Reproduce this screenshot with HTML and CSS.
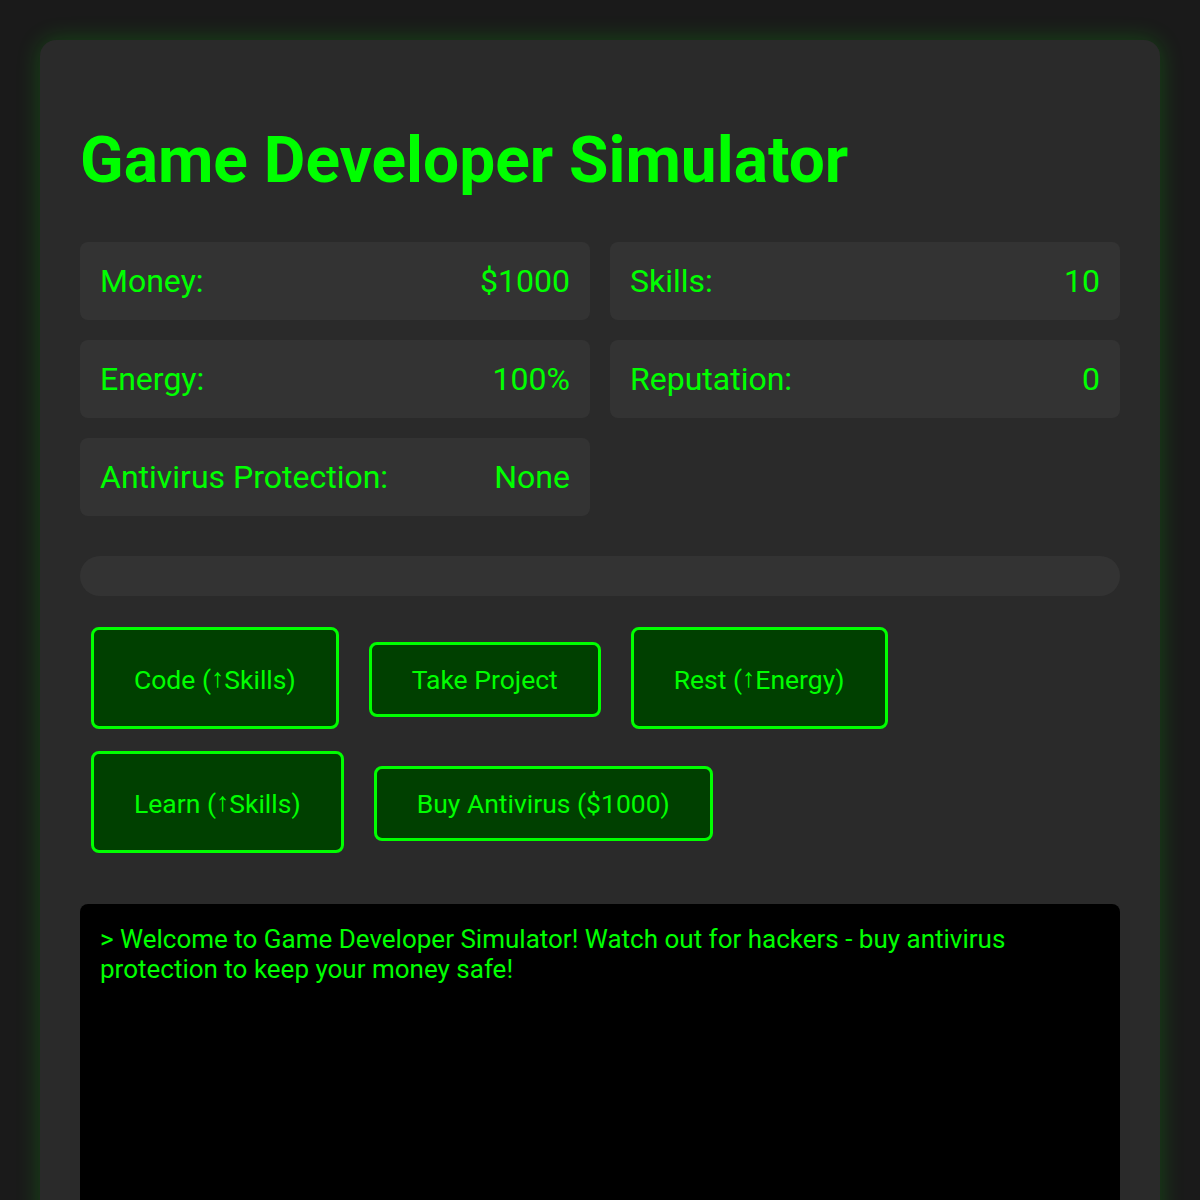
FILE: index.html
```html
<!DOCTYPE html>
<html>
  <head>
    <title>Game Developer Simulator</title>
    <link rel="stylesheet" href="styles.css">
  </head>

  <body>
    <div id="game">
      <h1>Game Developer Simulator</h1>

      <!-- Player stats -->
      <div id="stats">
        <div class="stat">
          <span>Money:</span>
          <span id="money">$1000</span>
        </div>
        <div class="stat">
          <span>Skills:</span>
          <span id="skills">10</span>
        </div>
        <div class="stat">
          <span>Energy:</span>
          <span id="energy">100%</span>
        </div>
        <div class="stat">
          <span>Reputation:</span>
          <span id="reputation">0</span>
        </div>
        <div class="stat">
          <span>Antivirus Protection:</span>
          <span id="antivirus">None</span>
        </div>
      </div>

      <div id="progress">
        <div id="progressFill"></div>
      </div>

      <!-- Actions -->
      <div id="actions">
        <button id="codeBtn">Code (<span class="up">↑</span>Skills)</button>
        <button id="projectBtn">Take Project</button>
        <button id="restBtn">Rest (<span class="up">↑</span>Energy)</button>
        <button id="learnBtn">Learn (<span class="up">↑</span>Skills)</button>
        <button id="antivirusBtn">Buy Antivirus ($1000)</button>
      </div>

      <div id="log">
        <p>&gt; Welcome to Game Developer Simulator! Watch out for hackers - buy antivirus protection to keep your money safe!</p>
      </div>
    </div>
  </body>
</html>
```

FILE: styles.css
```css
body {
  margin: 0;
  padding: 40px;
  background: #1a1a1a;
  color: #00ff00;
  font-family: Roboto, "Liberation Sans", sans-serif;
  font-size: 26px;
}

#game {
  max-width: 1040px;
  margin: 0 auto;
  padding: 40px;
  background: #2a2a2a;
  border-radius: 16px;
  box-shadow: 0 0 24px rgba(0, 255, 0, 0.2);
}

h1 {
  font-size: 64px;
  margin: 43px 0 44px;
}

#stats {
  display: grid;
  grid-template-columns: 1fr 1fr;
  gap: 20px;
  margin-bottom: 40px;
}

.stat {
  display: flex;
  justify-content: space-between;
  padding: 20px;
  background: #333;
  border-radius: 8px;
  font-size: 32px;
}

#progress {
  height: 40px;
  background: #333;
  border-radius: 20px;
  overflow: hidden;
  margin-bottom: 20px;
}

#progressFill {
  width: 0;
  height: 100%;
  background: #00ff00;
}

#actions {
  display: flex;
  flex-wrap: wrap;
  align-items: baseline;
  column-gap: 8px;
  margin-bottom: 40px;
}

button {
  margin: 11px;
  padding: 19px 40px;
  background: #004000;
  color: #00ff00;
  border: 3px solid #00ff00;
  border-radius: 8px;
  font-family: inherit;
  font-size: 26.5px;
  cursor: pointer;
}

button:hover {
  background: #005500;
}

/* the arrow glyph sits in a taller line */
.up {
  line-height: 58px;
  vertical-align: 2px;
}

#log {
  height: 300px;
  overflow-y: auto;
  padding: 20px;
  background: #000;
  border-radius: 8px;
}

#log p {
  margin: 0;
}
```
